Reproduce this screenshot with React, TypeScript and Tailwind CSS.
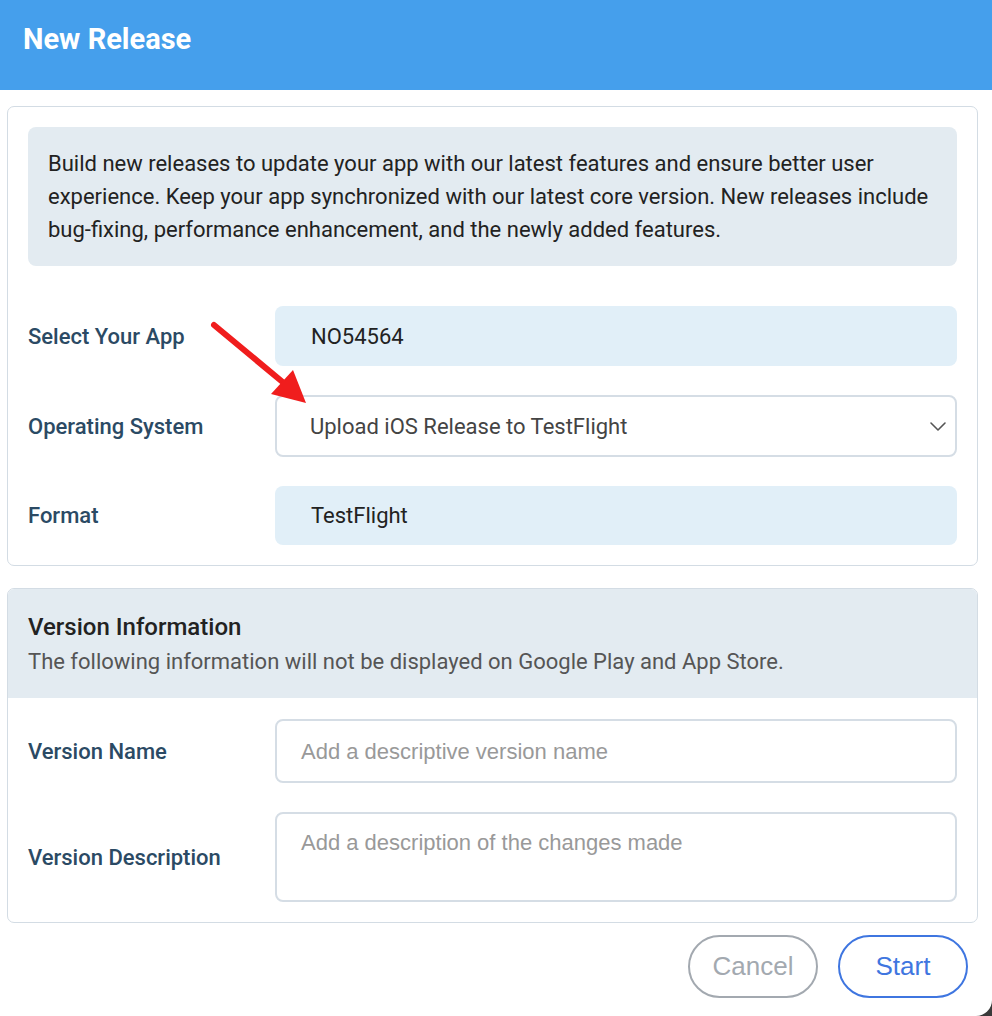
import React from "react";

function Label({ children }: { children: React.ReactNode }) {
  return (
    <div className="w-[247px] shrink-0 text-[22px] font-medium text-[#2b4a64]">{children}</div>
  );
}

export default function App() {
  return (
    <div className="w-[992px] h-[1016px] bg-[#3a3a3a] font-['Roboto',sans-serif]">
      <div className="relative w-full h-full bg-white rounded-br-[16px] overflow-hidden flex flex-col">
        <div className="h-[90px] bg-[#459fec] flex items-center px-[23px] shrink-0">
          <h1 className="text-[29px] font-bold text-white -mt-[10px]">New Release</h1>
        </div>

        <div className="px-[7px] pr-[14px] pt-[16px] flex flex-col">
          {/* Card 1 */}
          <div className="border border-[#d3dce4] rounded-[7px] p-[20px] flex flex-col">
            <div className="bg-[#e3ebf1] rounded-[8px] px-[20px] pt-[20px] pb-[20px] text-[22px] leading-[33px] text-[#222]">
              Build new releases to update your app with our latest features and ensure better user experience. Keep your app synchronized with our latest core version. New releases include bug-fixing, performance enhancement, and the newly added features.
            </div>

            <div className="mt-[40px] flex flex-col gap-[29px]">
              <div className="flex items-center">
                <Label>Select Your App</Label>
                <div className="flex-1 h-[60px] rounded-[8px] bg-[#e1eff8] flex items-center pl-[36px] text-[22px] text-[#222]">
                  NO54564
                </div>
              </div>
              <div className="flex items-center">
                <Label>Operating System</Label>
                <div className="flex-1 h-[62px] rounded-[8px] border-2 border-[#d5dde5] bg-white flex items-center pl-[33px] pr-[8px] text-[22px] text-[#444]">
                  <span className="flex-1">Upload iOS Release to TestFlight</span>
                  <svg width="18" height="18" viewBox="0 0 18 18" fill="none">
                    <path d="M2 6l7 7 7-7" stroke="#555" strokeWidth="1.6" strokeLinecap="round" strokeLinejoin="round" />
                  </svg>
                </div>
              </div>
              <div className="flex items-center">
                <Label>Format</Label>
                <div className="flex-1 h-[59px] rounded-[8px] bg-[#e1eff8] flex items-center pl-[36px] text-[22px] text-[#222]">
                  TestFlight
                </div>
              </div>
            </div>
          </div>

          {/* Card 2 */}
          <div className="mt-[22px] border border-[#d3dce4] rounded-[7px] flex flex-col overflow-hidden">
            <div className="bg-[#e3ebf1] h-[109px] px-[20px] pt-[22px]">
              <div className="text-[24px] font-medium text-[#222] leading-[32px]">Version Information</div>
              <div className="text-[22px] text-[#555] leading-[30px] mt-[4px]">
                The following information will not be displayed on Google Play and App Store.
              </div>
            </div>
            <div className="px-[20px] pt-[21px] pb-[20px] flex flex-col gap-[29px]">
              <div className="flex items-center">
                <Label>Version Name</Label>
                <div className="flex-1 h-[64px] rounded-[8px] border-2 border-[#d5dde5] bg-white flex items-center pl-[24px] text-[22px] text-[#999] font-['Liberation_Sans',sans-serif]">
                  Add a descriptive version name
                </div>
              </div>
              <div className="flex items-center">
                <Label>Version Description</Label>
                <div className="flex-1 h-[90px] rounded-[8px] border-2 border-[#d5dde5] bg-white pl-[24px] pt-[12px] text-[22px] text-[#999] font-['Liberation_Sans',sans-serif]">
                  Add a description of the changes made
                </div>
              </div>
            </div>
          </div>

          <div className="mt-[12px] flex justify-end gap-[20px] pr-[10px] font-['Liberation_Sans',sans-serif]">
            <button className="w-[130px] h-[63px] rounded-full border-2 border-[#a3a9b0] text-[#a3a9b0] text-[26px] bg-white">
              Cancel
            </button>
            <button className="w-[130px] h-[63px] rounded-full border-2 border-[#3f76e0] text-[#3f76e0] text-[26px] bg-white">
              Start
            </button>
          </div>
        </div>

        {/* Red arrow annotation */}
        <svg className="absolute left-[205px] top-[318px]" width="110" height="95" viewBox="0 0 110 95">
          <line x1="9" y1="7" x2="80" y2="66" stroke="#f01d1d" strokeWidth="6" strokeLinecap="round" />
          <polygon points="101,85 66,76 88,52" fill="#f01d1d" />
        </svg>
      </div>
    </div>
  );
}
